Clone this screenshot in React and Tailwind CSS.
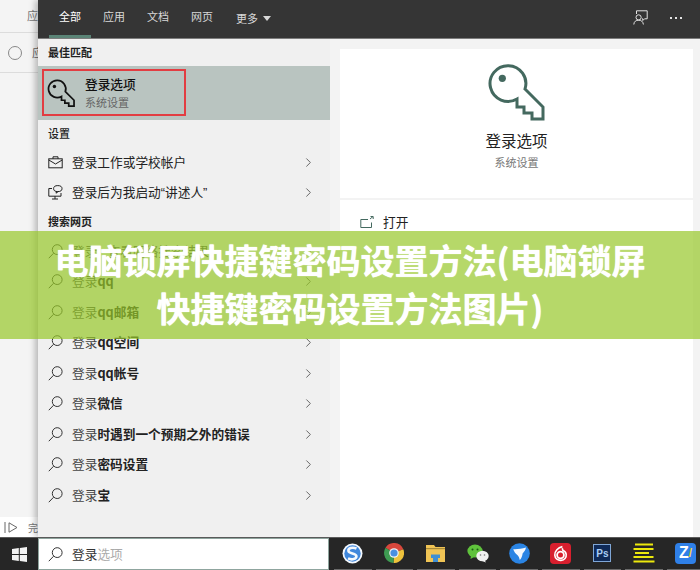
import React from 'react';
import { ChevronRight } from 'lucide-react';

const cjk = "font-['Noto_Sans_CJK_SC','Noto_Sans',sans-serif]";

const tabs = ['全部', '应用', '文档', '网页'];

const searchRows = [
  { bold: '', rest: ' - 查看网络搜索结果', light: true },
  { bold: 'qq' },
  { bold: 'qq邮箱' },
  { bold: 'qq空间' },
  { bold: 'qq帐号' },
  { bold: '微信' },
  { bold: '时遇到一个预期之外的错误' },
  { bold: '密码设置' },
  { bold: '宝' },
];

function KeyIcon({ size, color, stroke }) {
  return (
    <svg width={size} height={size} viewBox="0 0 56 56" fill="none" stroke={color} strokeWidth={stroke} className="overflow-visible">
      <path d="M36 24 L54 42 L54 54 L43 54 L43 48 L35 48 L35 42 L28 42 L28 34 A17.9 17.9 0 1 1 36 24 Z" strokeLinejoin="miter" />
      <circle cx="13.3" cy="13.3" r="3.6" fill={color} stroke="none" />
    </svg>
  );
}

function SearchGlyph({ size = 15, color = '#333' }) {
  return (
    <svg width={size} height={size} viewBox="0 0 15 15" fill="none" stroke={color} strokeWidth="1">
      <circle cx="9.2" cy="5.6" r="4.9" />
      <path d="M5.6 9.2 L0.8 14.2" />
    </svg>
  );
}

function BriefcaseGlyph() {
  return (
    <svg width="15" height="13" viewBox="0 0 15 13" fill="none" stroke="#222" strokeWidth="1">
      <rect x="0.8" y="2.8" width="13.4" height="9" />
      <path d="M5 2.8 V0.8 H10 V2.8 M0.8 4 L7.5 8 L14.2 4" />
    </svg>
  );
}

function NarratorGlyph() {
  return (
    <svg width="15" height="15" viewBox="0 0 15 15" fill="none" stroke="#222" strokeWidth="1">
      <path d="M4 3.5 H0.8 V11.2 H13 V8" />
      <path d="M7 14 V11.2 M4 14 H10" />
      <ellipse cx="9.8" cy="3.6" rx="4.2" ry="3" />
      <path d="M8.6 6.4 L8 8.2 L10.2 6.6" />
    </svg>
  );
}

function Row({ icon, children }) {
  return (
    <div className="flex h-[30.5px] items-center pb-[2px] pl-[10px] pr-[14px]">
      <span className="flex w-[24px] shrink-0 items-center">{icon}</span>
      <span className="flex-1 text-[12.7px] leading-none text-[#222]">{children}</span>
      <ChevronRight size={15} strokeWidth={1.4} className="text-[#555]" />
    </div>
  );
}

function TaskButton({ children }) {
  return (
    <div className="flex h-full w-[41.6px] shrink-0 flex-col items-center px-[2px]">
      <div className="flex flex-1 items-center justify-center">{children}</div>
      <div className="h-[1.5px] w-full bg-[#6b6b6b]" />
    </div>
  );
}

function SogouIcon() {
  return (
    <svg width="21" height="21" viewBox="0 0 21 21">
      <circle cx="10.5" cy="10.5" r="10" fill="#f4f8fd" />
      <circle cx="10.5" cy="10.5" r="8.2" fill="#3f87dc" />
      <path d="M14.5 5.5 C10 3.6 5.8 5.4 6.5 8.2 C7.2 11 14.4 10 14.4 13.2 C14.4 16 10 17.4 6 15.4" fill="none" stroke="#f4f8fd" strokeWidth="2.6" />
    </svg>
  );
}

function ChromeIcon() {
  return (
    <svg width="20" height="20" viewBox="0 0 20 20">
      <path d="M10 10 L1.5 4.8 A10 10 0 0 1 19.3 6.2 Z" fill="#d8473c" />
      <path d="M10 10 L19.3 6.2 A10 10 0 0 1 9.5 20 Z" fill="#eec23c" />
      <path d="M10 10 L9.5 20 A10 10 0 0 1 1.5 4.8 Z" fill="#3e9b52" />
      <circle cx="10" cy="10" r="4.8" fill="#f2f2f2" />
      <circle cx="10" cy="10" r="3.6" fill="#4a8fe0" />
    </svg>
  );
}

function FolderIcon() {
  return (
    <svg width="19" height="17" viewBox="0 0 19 17">
      <path d="M0 0 H8 L9.5 2 H19 V17 H0 Z" fill="#f0c455" />
      <rect x="0" y="3" width="19" height="1.2" fill="#a88a38" />
      <path d="M5 9.5 H14 V13 H12 V17 H7 V13 H5 Z" fill="#3f8fd4" />
    </svg>
  );
}

function WechatIcon() {
  return (
    <svg width="22" height="19" viewBox="0 0 22 19">
      <ellipse cx="8" cy="7" rx="7.6" ry="6.4" fill="#5fc23c" />
      <path d="M4 11 L3.5 15 L8 12.5 Z" fill="#5fc23c" />
      <circle cx="5.5" cy="5.4" r="1" fill="#1d5a16" />
      <circle cx="10.5" cy="5.4" r="1" fill="#1d5a16" />
      <ellipse cx="15.5" cy="12" rx="6.2" ry="5.2" fill="#f1f1f1" />
      <path d="M17.5 16 L19 18.6 L14.5 16.8 Z" fill="#f1f1f1" />
      <circle cx="13.5" cy="11" r="0.8" fill="#777" />
      <circle cx="17.5" cy="11" r="0.8" fill="#777" />
    </svg>
  );
}

function WingIcon() {
  return (
    <svg width="21" height="21" viewBox="0 0 21 21">
      <circle cx="10.5" cy="10.5" r="10.3" fill="#2a84e4" />
      <path d="M4.2 6.2 C8 6.4 12.5 6 17 4.6 C16.4 7.4 15 9.4 13.6 10.4 C13.4 12.8 12.4 15.2 10.8 17 C10.4 15 9.8 13.4 8.6 12.2 C6.6 10.8 5.2 8.8 4.2 6.2 Z" fill="#f5f9fe" />
    </svg>
  );
}

function NeteaseIcon() {
  return (
    <svg width="21" height="21" viewBox="0 0 21 21">
      <rect width="21" height="21" rx="4" fill="#d81f2e" />
      <circle cx="10.5" cy="12" r="3.4" fill="none" stroke="#fff" strokeWidth="1.8" />
      <path d="M12.4 3.6 C8 4.6 4.6 8 4.8 12.2 C5 15.6 8 17.6 11 17.4 C14.4 17.2 16.6 14.6 16.2 11.4 C16 9.6 14.6 8.2 13 7.6 L12.2 5.2" fill="none" stroke="#fff" strokeWidth="1.6" />
    </svg>
  );
}

function LinesIcon() {
  return (
    <svg width="22" height="20" viewBox="0 0 22 20">
      <rect x="2" y="0.5" width="18" height="2" fill="#ece80c" />
      <rect x="0.5" y="5" width="20" height="2" fill="#ece80c" />
      <rect x="2" y="9" width="14" height="2" fill="#ece80c" />
      <rect x="0.5" y="13" width="20" height="2" fill="#ece80c" />
      <rect x="0.5" y="17.5" width="21" height="2" fill="#ece80c" />
    </svg>
  );
}

export default function App() {
  return (
    <div className={`relative flex h-[570px] w-[700px] flex-col bg-[#f3f3f3] ${cjk}`}>
      <div className="flex min-h-0 flex-1">
        {/* window behind the search flyout */}
        <div className="flex w-[38px] shrink-0 flex-col bg-[#f4f4f4]">
          <div className="flex h-[33px] shrink-0 items-center justify-end border-b border-[#dcdcdc] pb-[2px] text-[11px] text-[#777]">
            <span>应</span>
          </div>
          <div className="flex h-[40px] shrink-0 items-center justify-between border-b border-[#dcdcdc] pl-[8px] text-[11px] text-[#666]">
            <span className="h-[14px] w-[14px] rounded-full border border-[#888]" />
            <span className="-mr-[5px]">应</span>
          </div>
          <div className="flex-1" />
          <div className="flex h-[20px] shrink-0 items-center justify-between bg-white pl-[4px] text-[10px] text-[#777]">
            <svg width="14" height="11" viewBox="0 0 14 11" fill="none" stroke="#666">
              <path d="M1 0 V11 M5 0.8 L13 5.5 L5 10.2 Z" />
            </svg>
            <span>完</span>
          </div>
        </div>

        {/* search flyout */}
        <div className="z-10 flex min-w-0 flex-1 flex-col shadow-[-3px_0_6px_rgba(0,0,0,0.25)]">
          <div className="flex h-[39px] shrink-0 items-stretch justify-between border-b border-[#7d7d7d] bg-[#353535] pl-[11px] pr-[18px] text-white">
            <div className="flex gap-[2px]">
              {tabs.map((t, i) => (
                <div
                  key={t}
                  className={`flex w-[42px] items-center justify-center border-b-[3px] pb-[4px] pt-[1px] text-[11px] ${
                    i === 0 ? 'border-[#5a8476] text-white' : 'border-transparent text-[#d8d8d8]'
                  }`}
                >
                  {t}
                </div>
              ))}
              <div className="ml-[11px] flex items-center gap-[5px] pb-[2px] text-[11px] text-[#d8d8d8]">
                更多
                <svg width="8" height="5" viewBox="0 0 8 5">
                  <path d="M0 0 H8 L4 5 Z" fill="#d8d8d8" />
                </svg>
              </div>
            </div>
            <div className="flex items-center gap-[22px] pb-[3px]">
              <svg width="15" height="15" viewBox="0 0 15 15" fill="none" stroke="#e4e4e4" strokeWidth="1">
                <path d="M3.5 4 V0.8 H14.2 V8.8 H11.5 L9.8 10.5 V8.8 H9" />
                <circle cx="5.6" cy="7.4" r="2.6" />
                <path d="M0.8 14.5 C1 11.4 3 10.2 5.6 10.2 C8.2 10.2 10 11.4 10.4 14.5" />
              </svg>
              <div className="flex gap-[3px]">
                <span className="h-[2px] w-[2px] bg-[#e4e4e4]" />
                <span className="h-[2px] w-[2px] bg-[#e4e4e4]" />
                <span className="h-[2px] w-[2px] bg-[#e4e4e4]" />
              </div>
            </div>
          </div>

          <div className="flex min-h-0 flex-1">
            <div className="w-[292px] shrink-0 bg-[#f0f0f0]">
              <div className="flex h-[27px] items-center pl-[10px] text-[11px] font-bold text-[#222]">最佳匹配</div>
              <div className="relative flex h-[54px] items-center bg-[#b9c4c0] pl-[10px]">
                <KeyIcon size={27} color="#111" stroke={3.6} />
                <div className="ml-[10px] flex flex-col gap-[6px]">
                  <span className="text-[12.7px] font-medium leading-none text-[#111]">登录选项</span>
                  <span className="text-[11px] leading-none text-[#666]">系统设置</span>
                </div>
                <div className="absolute left-[4px] top-[3px] h-[47px] w-[144px] border-2 border-[#e23d42]" />
              </div>
              <div className="flex h-[28px] items-center pb-[2px] pl-[10px] text-[11px] font-medium text-[#222]">设置</div>
              <Row icon={<BriefcaseGlyph />}>登录工作或学校帐户</Row>
              <Row icon={<NarratorGlyph />}>
                登录后为我启动
                <span className="font-['Liberation_Sans',sans-serif]">“</span>
                讲述人
                <span className="font-['Liberation_Sans',sans-serif]">”</span>
              </Row>
              <div className="flex h-[28px] items-center pb-[4px] pl-[10px] text-[11px] font-bold text-[#222]">搜索网页</div>
              {searchRows.map((r) => (
                <Row key={r.bold + (r.rest || '')} icon={<SearchGlyph />}>
                  <span className="text-[#444]">登录</span>
                  {r.bold && <span className="font-bold">{r.bold}</span>}
                  {r.rest && <span className="text-[#444]">{r.rest}</span>}
                </Row>
              ))}
            </div>

            {/* preview pane */}
            <div className="flex flex-1 flex-col gap-[2px] bg-[#f3f3f3] pb-0 pl-[10px] pr-[7px] pt-[10px]">
              <div className="flex h-[149px] shrink-0 flex-col items-center bg-white pt-[16px]">
                <KeyIcon size={56} color="#44695f" stroke={3} />
                <span className="mt-[12px] text-[15.5px] leading-none text-[#222]">登录选项</span>
                <span className="mt-[8px] text-[11px] leading-none text-[#777]">系统设置</span>
              </div>
              <div className="flex-1 bg-white pl-[20px] pt-[16px]">
                <div className="flex items-center gap-[9px] text-[12.7px] leading-none text-[#222]">
                  <svg width="14" height="13" viewBox="0 0 14 13" fill="none" stroke="#44695f" strokeWidth="1">
                    <path d="M8 3.5 H0.8 V11.5 H11.5 V6.5 M10 3 L13 0.5 M10.5 0.5 H13.2 V3" />
                  </svg>
                  打开
                </div>
              </div>
            </div>
          </div>
        </div>
      </div>

      {/* taskbar */}
      <div className="z-20 flex h-[33px] shrink-0 items-stretch border-t border-[#5a5a5a] bg-[#262626]">
        <div className="flex w-[38px] shrink-0 items-center justify-center">
          <svg width="15" height="15" viewBox="0 0 15 15" fill="#f2f2f2">
            <path d="M0 2 L6.8 1 V7 H0 Z M7.8 0.9 L15 0 V7 H7.8 Z M0 8 H6.8 V14 L0 13 Z M7.8 8 H15 V15 L7.8 14.1 Z" />
          </svg>
        </div>
        <div className="flex w-[291px] shrink-0 items-center border border-[#8fa59e] bg-white pl-[9px] text-[12.7px] leading-none">
          <span className="mr-[9px] flex"><SearchGlyph /></span>
          <span className="text-[#333]">登录</span>
          <span className="text-[#aaa]">选项</span>
        </div>
        <div className="flex min-w-0 flex-1 pl-[3px]">
          <TaskButton><SogouIcon /></TaskButton>
          <TaskButton><ChromeIcon /></TaskButton>
          <TaskButton><FolderIcon /></TaskButton>
          <TaskButton><WechatIcon /></TaskButton>
          <TaskButton><WingIcon /></TaskButton>
          <TaskButton><NeteaseIcon /></TaskButton>
          <TaskButton>
            <div className="flex h-[18px] w-[18px] items-center justify-center border border-[#7fa6d6] bg-[#0f2a58] font-['Liberation_Sans',sans-serif] text-[10px] font-bold text-[#a9cdf5]">
              Ps
            </div>
          </TaskButton>
          <TaskButton><LinesIcon /></TaskButton>
          <TaskButton>
            <div className="flex h-[21px] w-[21px] items-center justify-center rounded-[4px] bg-[#2f80e8] font-['Liberation_Sans',sans-serif] text-[16px] font-bold leading-none text-white">
              Z<span className="text-[12px] text-[#f2d24a]">/</span>
            </div>
          </TaskButton>
        </div>
      </div>

      {/* article title banner */}
      <div className="absolute left-0 top-[231px] z-30 flex h-[108px] w-[700px] items-center justify-center bg-[#97c729]/70 px-[50px] pb-[2px] text-center text-[34px] font-bold leading-[48px] text-white [text-shadow:0_0_1px_#fff]">
        电脑锁屏快捷键密码设置方法(电脑锁屏快捷键密码设置方法图片)
      </div>
    </div>
  );
}
